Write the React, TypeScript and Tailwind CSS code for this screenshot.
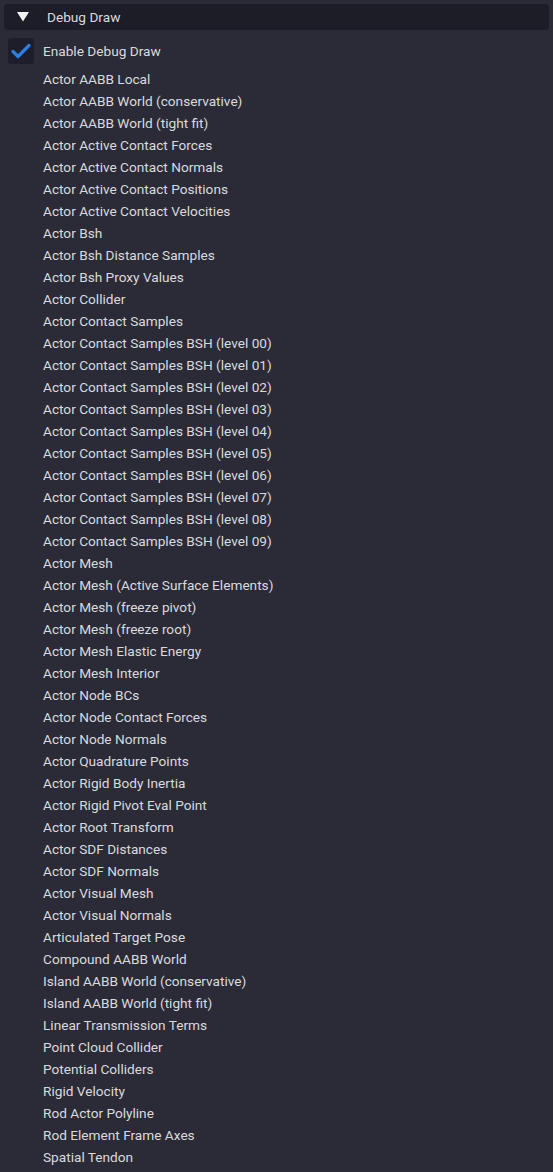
const items = [
  "Actor AABB Local",
  "Actor AABB World (conservative)",
  "Actor AABB World (tight fit)",
  "Actor Active Contact Forces",
  "Actor Active Contact Normals",
  "Actor Active Contact Positions",
  "Actor Active Contact Velocities",
  "Actor Bsh",
  "Actor Bsh Distance Samples",
  "Actor Bsh Proxy Values",
  "Actor Collider",
  "Actor Contact Samples",
  "Actor Contact Samples BSH (level 00)",
  "Actor Contact Samples BSH (level 01)",
  "Actor Contact Samples BSH (level 02)",
  "Actor Contact Samples BSH (level 03)",
  "Actor Contact Samples BSH (level 04)",
  "Actor Contact Samples BSH (level 05)",
  "Actor Contact Samples BSH (level 06)",
  "Actor Contact Samples BSH (level 07)",
  "Actor Contact Samples BSH (level 08)",
  "Actor Contact Samples BSH (level 09)",
  "Actor Mesh",
  "Actor Mesh (Active Surface Elements)",
  "Actor Mesh (freeze pivot)",
  "Actor Mesh (freeze root)",
  "Actor Mesh Elastic Energy",
  "Actor Mesh Interior",
  "Actor Node BCs",
  "Actor Node Contact Forces",
  "Actor Node Normals",
  "Actor Quadrature Points",
  "Actor Rigid Body Inertia",
  "Actor Rigid Pivot Eval Point",
  "Actor Root Transform",
  "Actor SDF Distances",
  "Actor SDF Normals",
  "Actor Visual Mesh",
  "Actor Visual Normals",
  "Articulated Target Pose",
  "Compound AABB World",
  "Island AABB World (conservative)",
  "Island AABB World (tight fit)",
  "Linear Transmission Terms",
  "Point Cloud Collider",
  "Potential Colliders",
  "Rigid Velocity",
  "Rod Actor Polyline",
  "Rod Element Frame Axes",
  "Spatial Tendon",
];

export default function App() {
  return (
    <div
      className="min-h-[1172px] bg-[#2a2b37] text-[13.65px] text-[#dadadd] pt-1"
      style={{ fontFamily: "Roboto, 'Liberation Sans', sans-serif" }}
    >
      {/* collapsing header */}
      <div className="mx-1 h-[26px] rounded-sm bg-[#1c1d27] flex items-center">
        <svg width="12" height="10" viewBox="0 0 12 10" className="ml-[13px]">
          <polygon points="0,0 12,0 6,9.5" fill="#f2f2f2" />
        </svg>
        <span className="ml-[18px]">Debug Draw</span>
      </div>

      <div className="flex items-center mt-2 pl-2 h-[26px]">
        <div className="w-[26px] h-[26px] rounded-[3px] bg-[#1d1e29] flex items-center justify-center">
          <svg width="20" height="16" viewBox="0 0 20 16">
            <polyline
              points="2,8.5 7,13.5 18,2.5"
              fill="none"
              stroke="#2a80e6"
              strokeWidth="3.2"
              strokeLinecap="round"
              strokeLinejoin="round"
            />
          </svg>
        </div>
        <span className="ml-[9px]">Enable Debug Draw</span>
      </div>

      <div className="mt-1 pl-[43px]">
        {items.map((name) => (
          <div key={name} className="h-[22px] flex items-center">
            {name}
          </div>
        ))}
      </div>
    </div>
  );
}
